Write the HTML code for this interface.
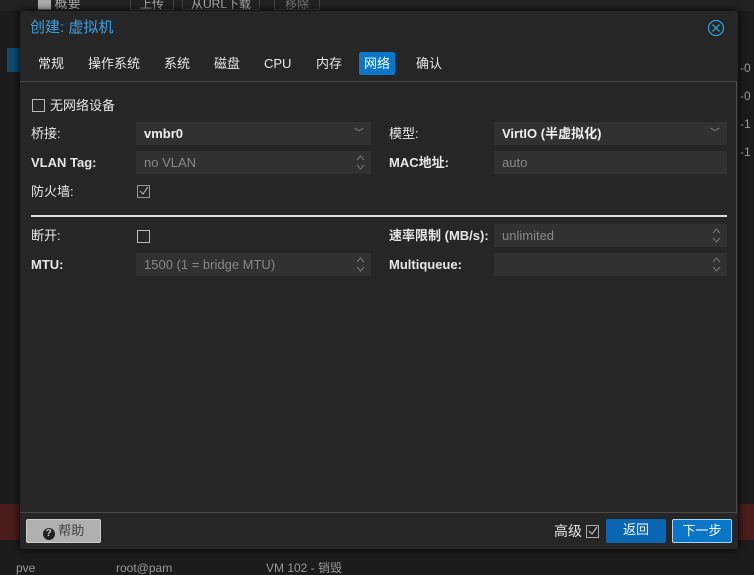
<!DOCTYPE html>
<html><head><meta charset="utf-8"><style>
*{box-sizing:border-box;margin:0;padding:0}
body{width:754px;height:570px;background:#1c1c1c;font-family:"Liberation Sans","Noto Sans CJK SC",sans-serif;font-size:13px;color:#e0e0e0;position:relative;overflow:hidden}
.abs{position:absolute}
.dlg{left:20px;top:11px;width:718px;height:538px;background:#262626;border-radius:3px;box-shadow:0 0 8px #000}
.title{left:10px;top:7px;color:#3ea0e0;font-size:15px;line-height:20px}
.tab{top:41px;height:23px;line-height:23px;padding:0 5px;font-size:13px;color:#e6e6e6}
.tab.on{background:#0a76c8;color:#fff;border-radius:2px}
.body{left:0;top:70px;width:717px;height:432px;border:1px solid #4a4a4a;border-left:none}
.lbl{font-size:13px;color:#e6e6e6;line-height:23px;height:23px;white-space:nowrap}
.f{height:23px;background:#313131;color:#888;line-height:23px;padding-left:8px;font-size:13px}
.f.w{color:#eee}
.arr{position:absolute;right:7px;top:0;color:#777;font-size:10px}
.spin{position:absolute;right:6px;top:3px;width:9px;height:17px}
.cb{width:13px;height:13px;border:1px solid #bbb}
.btn{height:24px;line-height:22px;text-align:center;font-size:13px;border-radius:2px}
</style></head><body>
<div class="abs" style="left:0;top:0;width:754px;height:11px;background:#222"></div>
<div class="abs" style="left:38px;top:-4px;color:#aaa;font-size:13px;line-height:15px">▇ 概要</div>
<div class="abs" style="left:130px;top:-4px;width:44px;height:14px;border:1px solid #444;color:#aaa;text-align:center;font-size:12px;line-height:14px">上传</div>
<div class="abs" style="left:182px;top:-4px;width:78px;height:14px;border:1px solid #444;color:#aaa;text-align:center;font-size:12px;line-height:14px">从URL下载</div>
<div class="abs" style="left:274px;top:-4px;width:46px;height:14px;border:1px solid #444;color:#777;text-align:center;font-size:12px;line-height:14px">移除</div>
<div class="abs" style="left:7px;top:48px;width:13px;height:24px;background:#0c4a70"></div>
<div class="abs" style="left:740px;top:54px;color:#999;font-size:12px;line-height:28px">-0<br>-0<br>-1<br>-1</div>
<div class="abs" style="left:0;top:504px;width:20px;height:36px;background:#4a1c1c"></div>
<div class="abs" style="left:738px;top:504px;width:16px;height:36px;background:#4a1c1c"></div>
<div class="abs" style="left:16px;top:561px;color:#999;font-size:12px;line-height:14px">pve</div>
<div class="abs" style="left:116px;top:561px;color:#999;font-size:12px;line-height:14px">root@pam</div>
<div class="abs" style="left:266px;top:561px;color:#999;font-size:12px;line-height:14px">VM 102 - 销毁</div>

<div class="abs dlg">
 <div class="abs title">创建: 虚拟机</div>
 <svg class="abs" style="left:687px;top:8px" width="18" height="18" viewBox="0 0 18 18"><circle cx="9" cy="9" r="7.5" fill="none" stroke="#2a9fd6" stroke-width="1.3"/><path d="M5.5 5.5L12.5 12.5M12.5 5.5L5.5 12.5" stroke="#2a9fd6" stroke-width="1.3"/></svg>
 <div class="abs tab" style="left:13px">常规</div>
 <div class="abs tab" style="left:63px">操作系统</div>
 <div class="abs tab" style="left:139px">系统</div>
 <div class="abs tab" style="left:189px">磁盘</div>
 <div class="abs tab" style="left:239px">CPU</div>
 <div class="abs tab" style="left:291px">内存</div>
 <div class="abs tab on" style="left:339px">网络</div>
 <div class="abs tab" style="left:391px">确认</div>
 <div class="abs body">
  <div class="abs cb" style="left:12px;top:17px"></div>
  <div class="abs lbl" style="left:30px;top:12px">无网络设备</div>
  <div class="abs lbl" style="left:11px;top:40px">桥接:</div>
  <div class="abs f w" style="left:116px;top:40px;width:235px;font-weight:bold">vmbr0<span class="arr">﹀</span></div>
  <div class="abs lbl" style="left:369px;top:40px">模型:</div>
  <div class="abs f w" style="left:474px;top:40px;width:233px;font-weight:bold">VirtIO (半虚拟化)<span class="arr">﹀</span></div>
  <div class="abs lbl" style="left:11px;top:69px;font-weight:bold">VLAN Tag:</div>
  <div class="abs f" style="left:116px;top:69px;width:235px">no VLAN<svg class="spin" viewBox="0 0 9 17"><path d="M1 6L4.5 2L8 6M1 11L4.5 15L8 11" fill="none" stroke="#777"/></svg></div>
  <div class="abs lbl" style="left:369px;top:69px;font-weight:bold">MAC地址:</div>
  <div class="abs f" style="left:474px;top:69px;width:233px">auto</div>
  <div class="abs lbl" style="left:11px;top:98px">防火墙:</div>
  <div class="abs cb" style="left:117px;top:103px;border-color:#999"></div>
  <svg class="abs" style="left:118px;top:103px" width="12" height="12"><path d="M2 6L5 9L10 2" fill="none" stroke="#aaa" stroke-width="1.2"/></svg>
  <div class="abs" style="left:11px;top:133px;width:696px;height:2px;background:#ddd"></div>
  <div class="abs lbl" style="left:11px;top:142px">断开:</div>
  <div class="abs cb" style="left:117px;top:148px"></div>
  <div class="abs lbl" style="left:369px;top:142px;font-weight:bold">速率限制 (MB/s):</div>
  <div class="abs f" style="left:474px;top:142px;width:233px">unlimited<svg class="spin" viewBox="0 0 9 17"><path d="M1 6L4.5 2L8 6M1 11L4.5 15L8 11" fill="none" stroke="#777"/></svg></div>
  <div class="abs lbl" style="left:11px;top:171px;font-weight:bold">MTU:</div>
  <div class="abs f" style="left:116px;top:171px;width:235px">1500 (1 = bridge MTU)<svg class="spin" viewBox="0 0 9 17"><path d="M1 6L4.5 2L8 6M1 11L4.5 15L8 11" fill="none" stroke="#777"/></svg></div>
  <div class="abs lbl" style="left:369px;top:171px;font-weight:bold">Multiqueue:</div>
  <div class="abs f" style="left:474px;top:171px;width:233px"><svg class="spin" viewBox="0 0 9 17"><path d="M1 6L4.5 2L8 6M1 11L4.5 15L8 11" fill="none" stroke="#777"/></svg></div>
 </div>
 <div class="abs btn" style="left:6px;top:508px;width:75px;background:#b0b0b0;border:1px solid #ccc;color:#444">
  <span style="display:inline-block;width:12px;height:12px;border-radius:6px;background:#222;color:#ccc;font-size:10px;line-height:12px;font-weight:bold;vertical-align:-1px">?</span> 帮助</div>
 <div class="abs lbl" style="left:534px;top:509px;font-size:14px">高级</div>
 <div class="abs cb" style="left:566px;top:514px;border-color:#aaa"></div>
 <svg class="abs" style="left:567px;top:514px" width="12" height="12"><path d="M2 6L5 9L10 2" fill="none" stroke="#bbb" stroke-width="1.2"/></svg>
 <div class="abs btn" style="left:586px;top:508px;width:60px;background:#0a66b0;color:#fff">返回</div>
 <div class="abs btn" style="left:652px;top:508px;width:60px;background:#0a76c8;border:1px solid #aad4f5;color:#fff">下一步</div>
</div>
</body></html>
